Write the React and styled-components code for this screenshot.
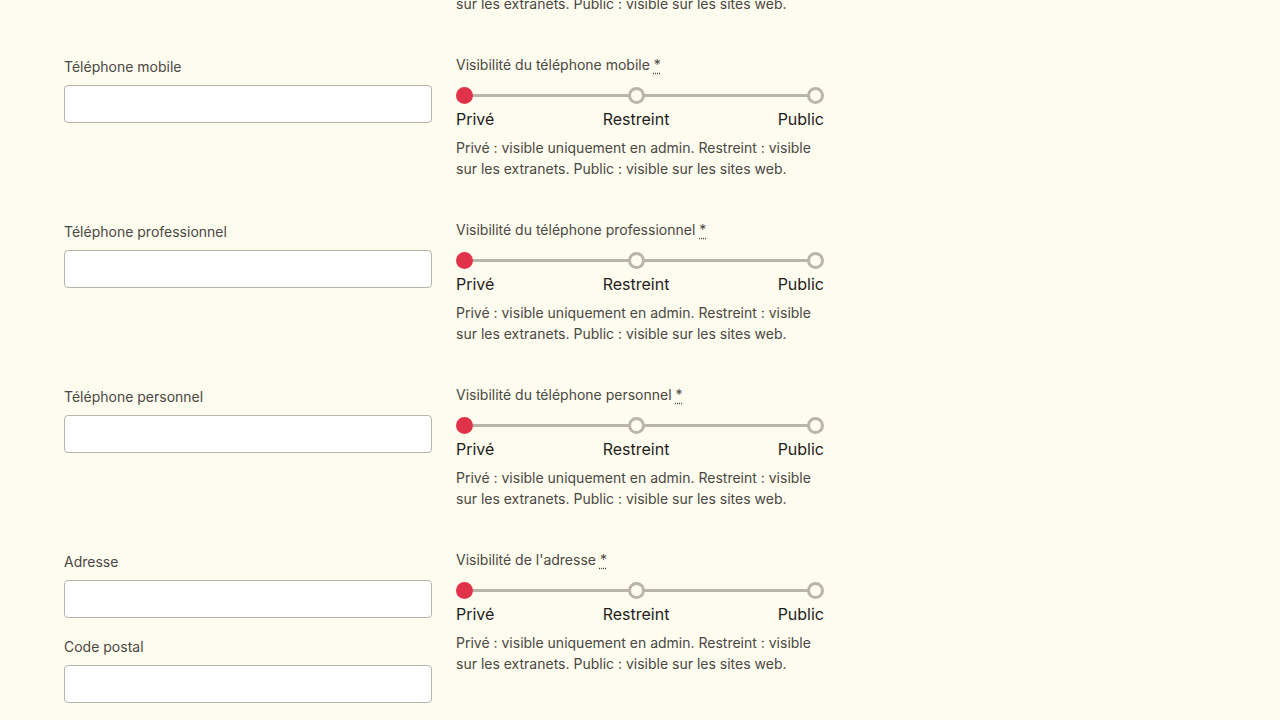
import React from 'react'
import styled, { createGlobalStyle } from 'styled-components'

const GlobalStyle = createGlobalStyle`
  html, body {
    margin: 0;
    padding: 0;
    background: #fefbef;
    font-family: Inter, "Noto Sans", sans-serif;
    overflow: hidden;
  }
`

const sections = [
  { fields: ['Email'], title: "Visibilité de l'email" },
  { fields: ['Téléphone mobile'], title: 'Visibilité du téléphone mobile' },
  { fields: ['Téléphone professionnel'], title: 'Visibilité du téléphone professionnel' },
  { fields: ['Téléphone personnel'], title: 'Visibilité du téléphone personnel' },
  { fields: ['Adresse', 'Code postal'], title: "Visibilité de l'adresse" },
]

const options = ['Privé', 'Restreint', 'Public']

const VisibilitySlider = ({ selected = 0 }) => (
  <Options>
    {options.map((label, i) => (
      <Option key={label} pos={i}>
        <Dot active={i === selected} />
        <OptionLabel>{label}</OptionLabel>
      </Option>
    ))}
  </Options>
)

const App = () => (
  <>
    <GlobalStyle />
    <Page>
      {sections.map(s => (
        <Section key={s.title}>
          <Fields>
            {s.fields.map(f => (
              <Field key={f}>
                <Label>{f}</Label>
                <Input type="text" />
              </Field>
            ))}
          </Fields>
          <Visibility>
            <Title>
              {s.title} <abbr title="obligatoire">*</abbr>
            </Title>
            <VisibilitySlider selected={0} />
            <Help>
              Privé : visible uniquement en admin. Restreint : visible sur les extranets. Public : visible sur les sites web.
            </Help>
          </Visibility>
        </Section>
      ))}
    </Page>
  </>
)

export default App

// the page is shown scrolled: the email block sits mostly above the fold
const Page = styled.main`
  margin-top: -110px;
  padding: 0 64px;
  display: flex;
  flex-direction: column;
  gap: 41px;
`

const Section = styled.section`
  display: grid;
  grid-template-columns: 368px 368px;
  column-gap: 24px;
  align-items: start;
`

const Fields = styled.div`
  display: flex;
  flex-direction: column;
  gap: 19px;
  padding-top: 2px;
`

const Field = styled.div`
  display: flex;
  flex-direction: column;
  gap: 8px;
`

const Label = styled.label`
  font-size: 14px;
  line-height: 20px;
  color: #4a4843;
`

const Input = styled.input`
  box-sizing: border-box;
  width: 100%;
  height: 38px;
  border: 1px solid #b7b4aa;
  border-radius: 4px;
  background: #fff;
  font: inherit;
`

const Visibility = styled.div`
  display: flex;
  flex-direction: column;
`

const Title = styled.div`
  font-size: 14px;
  line-height: 20px;
  color: #4a4843;

  abbr {
    text-decoration: underline dotted;
    text-underline-offset: 3px;
  }
`

const Options = styled.div`
  position: relative;
  display: flex;
  justify-content: space-between;
  margin-top: 12px;

  &::before {
    content: '';
    position: absolute;
    left: 8px;
    right: 8px;
    top: 7px;
    height: 3px;
    background: #b9b5a8;
  }
`

const Option = styled.div`
  position: relative;
  display: flex;
  flex-direction: column;
  align-items: ${p => (p.pos === 0 ? 'flex-start' : p.pos === 1 ? 'center' : 'flex-end')};
  gap: 5px;
`

const Dot = styled.span`
  box-sizing: border-box;
  width: 17px;
  height: 17px;
  border-radius: 50%;
  background: ${p => (p.active ? '#e0334a' : '#fefbef')};
  border: ${p => (p.active ? 'none' : '3px solid #b9b5a8')};
`

const OptionLabel = styled.span`
  font-size: 16px;
  line-height: 20px;
  color: #1f1e1c;
`

const Help = styled.p`
  margin: 8px 0 0;
  font-size: 14px;
  line-height: 21px;
  color: #4a4843;
`
